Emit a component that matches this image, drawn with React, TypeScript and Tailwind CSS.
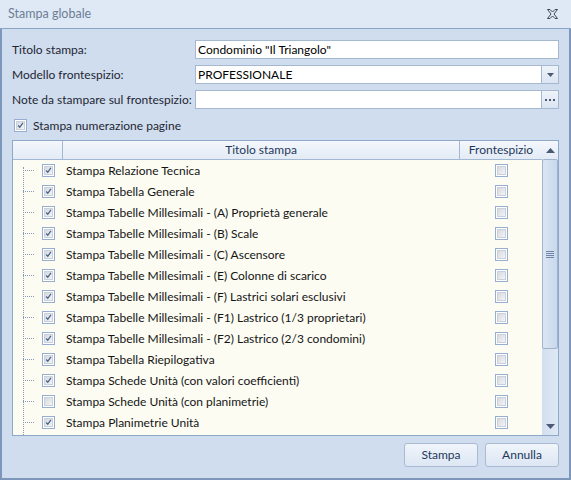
import React from "react";

const rows: { t: string; c: boolean }[] = [
  { t: "Stampa Relazione Tecnica", c: true },
  { t: "Stampa Tabella Generale", c: true },
  { t: "Stampa Tabelle Millesimali - (A) Proprietà generale", c: true },
  { t: "Stampa Tabelle Millesimali - (B) Scale", c: true },
  { t: "Stampa Tabelle Millesimali - (C) Ascensore", c: true },
  { t: "Stampa Tabelle Millesimali - (E) Colonne di scarico", c: true },
  { t: "Stampa Tabelle Millesimali - (F) Lastrici solari esclusivi", c: true },
  { t: "Stampa Tabelle Millesimali - (F1) Lastrico (1/3 proprietari)", c: true },
  { t: "Stampa Tabelle Millesimali - (F2) Lastrico (2/3 condomini)", c: true },
  { t: "Stampa Tabella Riepilogativa", c: true },
  { t: "Stampa Schede Unità (con valori coefficienti)", c: true },
  { t: "Stampa Schede Unità (con planimetrie)", c: false },
  { t: "Stampa Planimetrie Unità", c: true },
];

function Check({ checked }: { checked: boolean }) {
  return (
    <div className="w-[13px] h-[13px] border border-[#98aed0] bg-white p-[1px] shrink-0">
      <div className="w-full h-full border border-[#c9d1dc] bg-gradient-to-br from-[#d6d9de] to-[#f3f4f6] flex items-center justify-center">
        {checked && (
          <svg width="9" height="9" viewBox="0 0 9 9">
            <path d="M1.5 4.5 L3.6 6.8 L7.6 1.2" fill="none" stroke="#4a6189" strokeWidth="1.6" />
          </svg>
        )}
      </div>
    </div>
  );
}

export default function App() {
  return (
    <div
      className="w-[571px] h-[480px] flex flex-col bg-[#d0ddee] text-[12px] text-[#1e2633]"
      style={{ fontFamily: 'Lato, "Noto Sans", sans-serif' }}
    >
      {/* title bar */}
      <div className="h-[29px] shrink-0 bg-[#dfe9f5] border-b border-[#8aa4c6] flex items-center justify-between pl-[8px] pr-[12px]">
        <span className="text-[#6c7e95] text-[12.5px]">Stampa globale</span>
        <svg width="11" height="10" viewBox="0 0 11 10" className="mr-[1px]">
          <path
            d="M0.5 0.5 H3 L5.5 3 L8 0.5 H10.5 L7 5 L10.5 9.5 H8 L5.5 7 L3 9.5 H0.5 L4 5 Z"
            fill="none"
            stroke="#3b4658"
            strokeWidth="1"
          />
        </svg>
      </div>

      {/* body */}
      <div className="flex-1 flex flex-col border-l-2 border-r-2 border-b-2 border-[#7d97ba] px-[10px] pt-[11px]">
        <div className="flex flex-col gap-[6px]">
          <div className="flex items-center h-[19px]">
            <span className="w-[183px] shrink-0 whitespace-nowrap">Titolo stampa:</span>
            <div className="flex-1 h-[19px] bg-white border border-[#a6b8d0] flex items-center px-[2px] text-black">
              Condominio "Il Triangolo"
            </div>
          </div>
          <div className="flex items-center h-[19px]">
            <span className="w-[183px] shrink-0 whitespace-nowrap">Modello frontespizio:</span>
            <div className="flex-1 h-[19px] bg-white border border-[#a6b8d0] flex items-center text-black">
              <span className="flex-1 px-[2px]">PROFESSIONALE</span>
              <div className="w-[17px] h-full border-l border-[#a6b8d0] bg-gradient-to-b from-[#eef3fa] to-[#dbe5f2] flex items-center justify-center">
                <svg width="7" height="4" viewBox="0 0 7 4">
                  <path d="M0 0 H7 L3.5 4 Z" fill="#4b5a74" />
                </svg>
              </div>
            </div>
          </div>
          <div className="flex items-center h-[19px]">
            <span className="w-[183px] shrink-0 whitespace-nowrap">Note da stampare sul frontespizio:</span>
            <div className="flex-1 h-[19px] bg-white border border-[#a6b8d0] flex items-center">
              <span className="flex-1" />
              <div className="w-[17px] h-full border-l border-[#a6b8d0] bg-gradient-to-b from-[#eef3fa] to-[#dbe5f2] flex items-center justify-center gap-[2px]">
                <div className="w-[2px] h-[2px] bg-[#4b5a74]" />
                <div className="w-[2px] h-[2px] bg-[#4b5a74]" />
                <div className="w-[2px] h-[2px] bg-[#4b5a74]" />
              </div>
            </div>
          </div>
        </div>

        <div className="flex items-center mt-[10px] h-[13px] pl-[2px] gap-[6px]">
          <Check checked />
          <span>Stampa numerazione pagine</span>
        </div>

        {/* grid */}
        <div className="mt-[8px] h-[296px] border border-[#8ea8c8] bg-[#fcfcf3] flex">
          <div className="w-[529px] flex flex-col">
            <div className="h-[19px] shrink-0 flex border-b border-[#a3b8d3] bg-gradient-to-b from-[#f4f7fc] to-[#e3ebf6] text-[#1e395b]">
              <div className="w-[50px] border-r border-[#a3b8d3]" />
              <div className="w-[397px] border-r border-[#a3b8d3] flex items-center justify-center">Titolo stampa</div>
              <div className="flex-1 flex items-center justify-center">Frontespizio</div>
            </div>
            <div className="flex-1 flex">
              <div className="w-[50px] relative flex flex-col">
                <div className="absolute left-[10px] top-[7px] bottom-0 border-l border-dotted border-[#8799b6]" />
                {rows.map((r, i) => (
                  <div key={i} className="h-[21px] flex items-center">
                    <div className="w-[11px] ml-[10px] border-t border-dotted border-[#8799b6]" />
                    <div className="ml-[8px]">
                      <Check checked={r.c} />
                    </div>
                  </div>
                ))}
              </div>
              <div className="w-[397px] flex flex-col text-[#151515]">
                {rows.map((r, i) => (
                  <div key={i} className="h-[21px] flex items-center pl-[3px] whitespace-nowrap">
                    {r.t}
                  </div>
                ))}
              </div>
              <div className="flex-1 flex flex-col items-center">
                {rows.map((r, i) => (
                  <div key={i} className="h-[21px] flex items-center">
                    <Check checked={false} />
                  </div>
                ))}
              </div>
            </div>
          </div>
          {/* scrollbar */}
          <div className="w-[16px] flex flex-col bg-gradient-to-r from-[#d3dff0] to-[#dfe8f4]">
            <div className="h-[18px] shrink-0 flex items-center justify-center bg-gradient-to-b from-[#f4f7fc] to-[#e3ebf6]">
              <svg width="9" height="5" viewBox="0 0 9 5">
                <path d="M0 5 H9 L4.5 0 Z" fill="#4b5a74" />
              </svg>
            </div>
            <div className="h-[190px] shrink-0 border border-[#9fb3cf] rounded-[2px] bg-gradient-to-r from-[#dbe6f4] to-[#c9d8ec] flex flex-col items-center justify-center gap-[1px]">
              <div className="w-[8px] h-[1px] bg-[#6f86a8]" />
              <div className="w-[8px] h-[1px] bg-[#6f86a8]" />
              <div className="w-[8px] h-[1px] bg-[#6f86a8]" />
              <div className="w-[8px] h-[1px] bg-[#6f86a8]" />
            </div>
            <div className="flex-1" />
            <div className="h-[18px] shrink-0 flex items-center justify-center">
              <svg width="9" height="5" viewBox="0 0 9 5">
                <path d="M0 0 H9 L4.5 5 Z" fill="#4b5a74" />
              </svg>
            </div>
          </div>
        </div>

        <div className="flex justify-end gap-[7px] mt-[7px]">
          <button className="w-[74px] h-[24px] border border-[#a9bad2] rounded-[3px] bg-gradient-to-b from-[#f1f5fb] to-[#dce6f3] text-[#1e395b] text-[12px]">
            Stampa
          </button>
          <button className="w-[74px] h-[24px] border border-[#a9bad2] rounded-[3px] bg-gradient-to-b from-[#f1f5fb] to-[#dce6f3] text-[#1e395b] text-[12px]">
            Annulla
          </button>
        </div>
      </div>
    </div>
  );
}
